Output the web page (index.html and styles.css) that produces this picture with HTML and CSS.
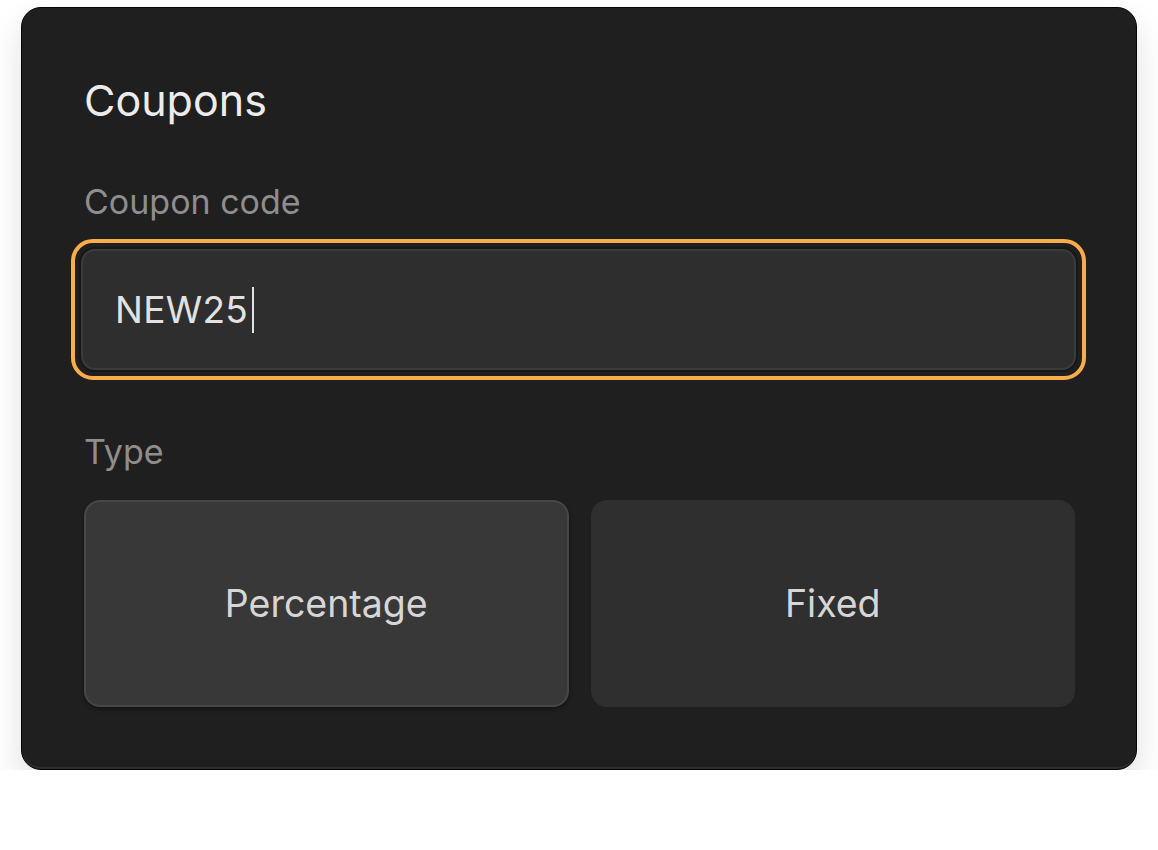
FILE: index.html
```html
<!DOCTYPE html>
<html lang="en">
<head>
    <meta charset="UTF-8">
    <meta name="viewport" content="width=device-width, initial-scale=1.0">
    <title>Coupons</title>
    <link rel="stylesheet" href="styles.css">
</head>
<body>

    <div class="card">
        <h2 class="title">Coupons</h2>

        <label class="label" for="code">Coupon code</label>
        <div class="input-ring">
            <div class="input">
                <span class="value">NEW25</span><span class="caret"></span>
            </div>
        </div>

        <div class="label type-label">Type</div>
        <div class="types">
            <button class="type-btn active">Percentage</button>
            <button class="type-btn">Fixed</button>
        </div>
    </div>

</body>
</html>
```

FILE: styles.css
```css
body {
    font-family: Inter, "Noto Sans", sans-serif;
    background-color: #ffffff;
    margin: 0;
    padding: 0;
}

.card {
    box-sizing: border-box;
    width: 1116px;
    height: 763px;
    margin: 7px 0 0 21px;
    padding: 66px 61px 0 62px;
    background-color: #1f1f1f;
    border: 1.5px solid #050505;
    border-radius: 20px;
    box-shadow: inset 0 -2px 0 #2c2c2c, 0 16px 32px rgba(0, 0, 0, 0.13);
}

.title {
    margin: 0;
    font-size: 43px;
    font-weight: 400;
    line-height: 52px;
    color: #ececec;
}

.label {
    display: block;
    margin-top: 56px;
    font-size: 34px;
    line-height: 40px;
    color: #8e8e8e;
}

.input-ring {
    margin: 17px 0 0 -13px;
    padding: 6px;
    border: 4px solid #f7ad4c;
    border-radius: 22px;
    width: 995px;
}

.input {
    box-sizing: border-box;
    display: flex;
    align-items: center;
    height: 121px;
    padding: 0 32px;
    background-color: #2e2e2e;
    border: 2px solid #3b3b3b;
    border-radius: 14px;
    box-shadow: 0 0 0 2px #171717;
}

.value {
    font-size: 37px;
    color: #e2e2e2;
    letter-spacing: 0.3px;
}

.caret {
    display: inline-block;
    width: 2px;
    height: 46px;
    margin-left: 4px;
    background-color: #e2e2e2;
}

.type-label {
    margin-top: 52px;
}

.types {
    display: grid;
    grid-template-columns: 1fr 1fr;
    gap: 22px;
    margin-top: 28px;
}

.type-btn {
    height: 207px;
    font-family: inherit;
    font-size: 37.5px;
    color: #d6d6d6;
    background-color: #2f2f2f;
    border: 2px solid #2f2f2f;
    border-radius: 16px;
}

.type-btn.active {
    background-color: #383838;
    border-color: #474747;
    box-shadow: 0 2px 4px rgba(0, 0, 0, 0.4);
}
```
